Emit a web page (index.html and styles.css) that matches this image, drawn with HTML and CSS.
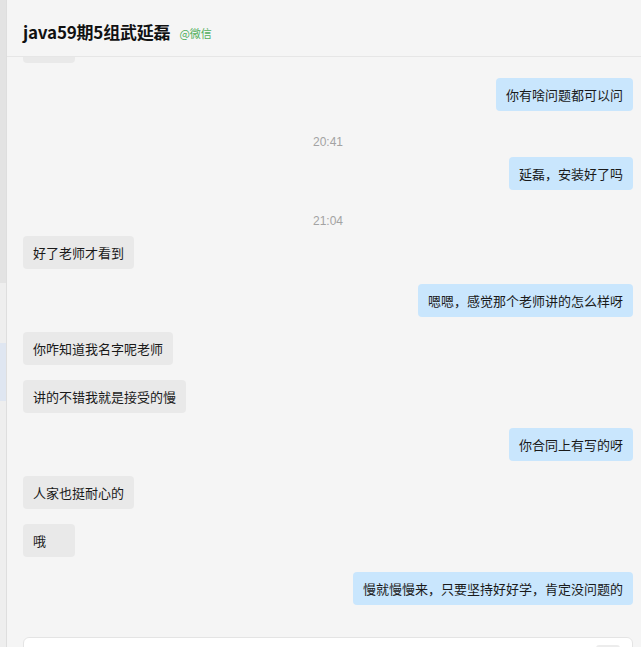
FILE: index.html
```html
<!DOCTYPE html>
<html lang="zh-CN">
<head>
<meta charset="utf-8">
<title>java59期5组武延磊</title>
<link rel="stylesheet" href="styles.css">
</head>
<body>
<div class="app">
  <div class="rail">
    <div class="rail-top"></div>
    <div class="rail-mid"></div>
    <div class="rail-sel"></div>
    <div class="rail-rest"></div>
  </div>
  <div class="main">
    <div class="header">
      <span class="title">java59期5组武延磊</span>
      <span class="source">@微信</span>
    </div>
    <div class="messages">
      <div class="list">
        <div class="msg left"><div class="bubble">&nbsp;</div></div>
        <div class="msg right"><div class="bubble">你有啥问题都可以问</div></div>
        <div class="time">20:41</div>
        <div class="msg right"><div class="bubble">延磊，安装好了吗</div></div>
        <div class="time">21:04</div>
        <div class="msg left"><div class="bubble">好了老师才看到</div></div>
        <div class="msg right"><div class="bubble">嗯嗯，感觉那个老师讲的怎么样呀</div></div>
        <div class="msg left"><div class="bubble">你咋知道我名字呢老师</div></div>
        <div class="msg left"><div class="bubble">讲的不错我就是接受的慢</div></div>
        <div class="msg right"><div class="bubble">你合同上有写的呀</div></div>
        <div class="msg left"><div class="bubble">人家也挺耐心的</div></div>
        <div class="msg left"><div class="bubble">哦</div></div>
        <div class="msg right"><div class="bubble">慢就慢慢来，只要坚持好好学，肯定没问题的</div></div>
      </div>
    </div>
    <div class="composer">
      <div class="input-box">
        <div class="send"></div>
      </div>
    </div>
  </div>
</div>
</body>
</html>
```

FILE: styles.css
```css
html, body {
  margin: 0;
  padding: 0;
  height: 647px;
  overflow: hidden;
  background: #f5f5f5;
  font-family: "Noto Sans CJK SC", "Microsoft YaHei", sans-serif;
  color: #1a1a1a;
}

.app {
  display: flex;
  height: 647px;
}

.rail {
  width: 6px;
  flex: none;
  display: flex;
  flex-direction: column;
  border-right: 1px solid #dedede;
}
.rail-top { height: 283px; background: #e3e3e3; }
.rail-mid { height: 60px; background: #eeeeee; }
.rail-sel { height: 58px; background: #dfe6f1; }
.rail-rest { flex: 1; background: #eeeeee; }

.main {
  flex: 1;
  display: flex;
  flex-direction: column;
  min-width: 0;
}

.header {
  height: 57px;
  flex: none;
  box-sizing: border-box;
  border-bottom: 1px solid #e6e6e6;
  display: flex;
  align-items: center;
  padding: 6px 16px 0;
  gap: 9px;
}
.title {
  font-size: 17px;
  font-weight: 700;
  color: #111;
  letter-spacing: -0.2px;
}
.source {
  font-size: 11px;
  color: #4fae5b;
  margin-top: 3px;
}

.messages {
  flex: 1;
  overflow: hidden;
  padding: 0 8px 0 16px;
}
.list {
  display: flex;
  flex-direction: column;
  margin-top: -27px;
}

.msg {
  display: flex;
  margin-top: 15px;
}
.msg:first-child { margin-top: 0; }
.msg.left { justify-content: flex-start; }
.msg.right { justify-content: flex-end; }

.bubble {
  font-size: 13px;
  line-height: 17px;
  padding: 8px 10px;
  border-radius: 4px;
  min-width: 32px;
  background: #e9e9e9;
  color: #1a1a1a;
  white-space: nowrap;
}
.msg.right .bubble { background: #c9e6fd; }

.time {
  margin-top: 23px;
  text-align: center;
  font-family: "Liberation Sans", Arial, sans-serif;
  font-size: 12px;
  line-height: 16px;
  color: #a3a3a3;
}
.time + .msg { margin-top: 7px; }

.composer {
  height: 10px;
  flex: none;
  overflow: hidden;
  padding: 0 8px 0 16px;
}
.input-box {
  height: 80px;
  background: #ffffff;
  border: 1px solid #e4e4e4;
  border-radius: 6px;
  box-sizing: border-box;
  position: relative;
}
.send {
  position: absolute;
  right: 12px;
  top: 7px;
  width: 24px;
  height: 20px;
  border-radius: 3px;
  background: #ececec;
}
```
